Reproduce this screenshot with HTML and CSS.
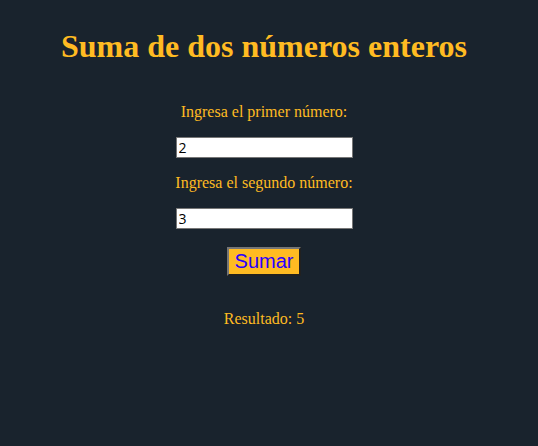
FILE: index.html
```html
<!DOCTYPE html>
<html lang="es">
<head>
<meta charset="utf-8">
<title>Suma de dos números enteros</title>
<link rel="stylesheet" href="styles.css">
</head>
<body>
<main class="suma">
<h1 class="titulo">Suma de dos números enteros</h1>
<form class="formulario">
<label class="etiqueta" for="num1">Ingresa el primer número:</label>
<input class="campo" id="num1" type="text" value="2">
<label class="etiqueta" for="num2">Ingresa el segundo número:</label>
<input class="campo" id="num2" type="text" value="3">
<button class="boton" type="button">Sumar</button>
</form>
<p class="resultado">Resultado: 5</p>
</main>
</body>
</html>
```
FILE: styles.css
```css
body {
  margin: 0;
  background: #19232d;
  color: #ffbb22;
  font: 16px/18px "Liberation Serif", "Times New Roman", serif;
}
.suma {
  padding: 28px 10px 0 0;
  text-align: center;
}
.titulo {
  margin: 0 0 38px;
  font-size: 32px;
  line-height: 37px;
}
.formulario {
  display: flex;
  flex-direction: column;
  align-items: center;
}
.etiqueta {
  margin-bottom: 16px;
}
.campo {
  box-sizing: border-box;
  width: 177px;
  height: 21px;
  margin-bottom: 16px;
  padding: 0 2px;
  border: 1px solid #767676;
  background: #fff;
  color: #000;
  font: 14px "Open Sans", "Noto Sans", sans-serif;
}
.boton {
  margin-top: 2px;
  padding: 1px 6px;
  border: 2px solid;
  border-color: #767676 #212121 #212121 #767676;
  background: #ffbb22;
  color: #2a00ff;
  font: 20px/23px "Liberation Sans", Arial, sans-serif;
}
.resultado {
  margin: 34px 0;
}
```
